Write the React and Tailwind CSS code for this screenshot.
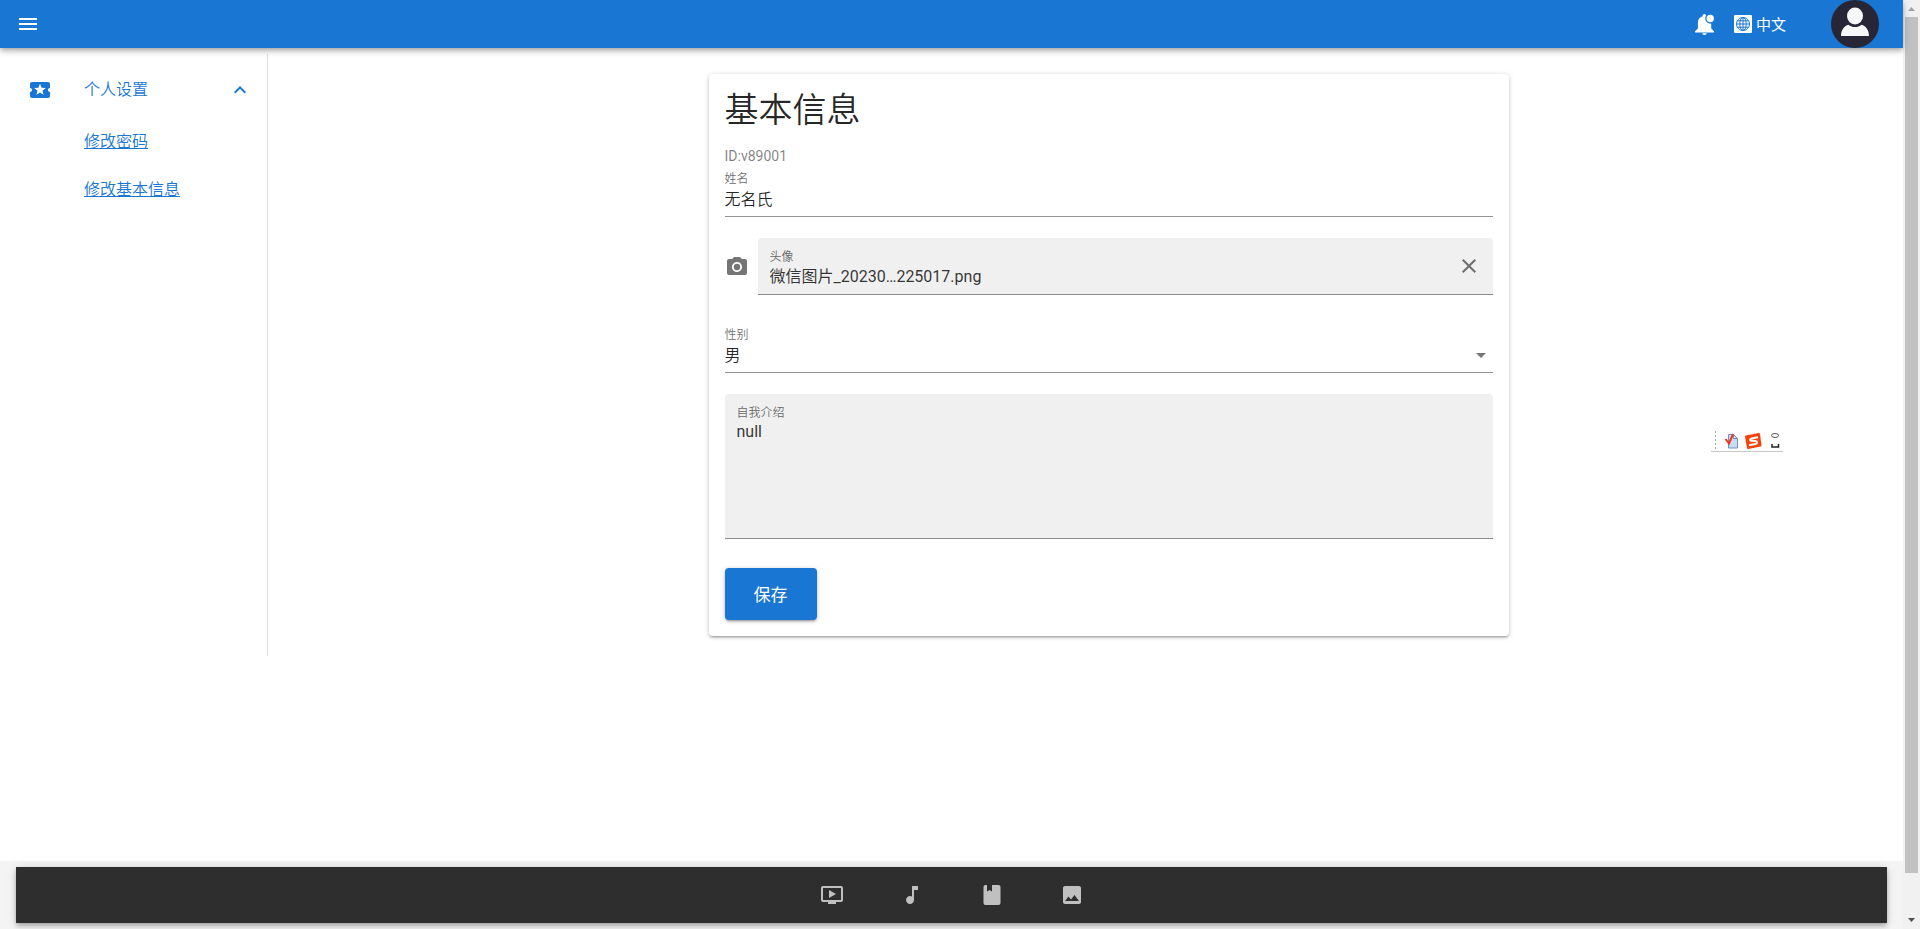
import React, { useState } from 'react';
import {
  MdMenu,
  MdLocalPlay,
  MdExpandLess,
  MdPhotoCamera,
  MdClose,
  MdArrowDropDown,
  MdOndemandVideo,
  MdMusicNote,
  MdImage,
} from 'react-icons/md';

const BellIcon = () => (
  <svg viewBox="0 0 19 21" className="h-[21px] w-[19px]" fill="currentColor" aria-hidden="true">
    <path d="M9.500 0c-1 0-1.900.8-1.900 1.800v.4C4.700 3 2.900 5.500 2.900 8.700v5.800L0 17.200V18.500h19v-1.300L16.200 14.500V9.600a5.300 5.300 0 0 1-5.700-6.900c.1-.4.300-.8.500-1.200C10.800.6 10.200 0 9.500 0z" />
    <circle cx="15.200" cy="4.500" r="3.700" />
    <path d="M7.300 19.300h4.400c0 1.100-1 1.700-2.200 1.700s-2.200-.6-2.200-1.700z" />
  </svg>
);

const GlobeIcon = () => (
  <svg viewBox="0 0 18 18" className="size-[18px]" aria-hidden="true">
    <rect width="18" height="18" rx="1" fill="#fff" />
    <g fill="none" stroke="#1976d2" strokeWidth="1">
      <circle cx="9" cy="9" r="6.500" />
      <ellipse cx="9" cy="9" rx="3.200" ry="6.500" />
      <path d="M9 2.500v13M2.500 9h13M3.500 5.800h11M3.500 12.200h11" />
    </g>
  </svg>
);

const Avatar = () => (
  <svg viewBox="0 0 48 48" className="size-12" aria-hidden="true">
    <circle cx="24" cy="24" r="24" fill="#272636" />
    <ellipse cx="24" cy="16" rx="8" ry="8.500" fill="#f7f7f7" />
    <path d="M10 36c0-5.500 3-10 7.500-11.200 1.800 1.500 4 2.300 6.500 2.300s4.700-.8 6.500-2.300C35 26 38 30.500 38 36z" fill="#f7f7f7" />
  </svg>
);

const BookIcon = () => (
  <svg viewBox="0 0 24 24" className="size-6" fill="currentColor" aria-hidden="true">
    <path d="M18.500 22a2 2 0 0 0 2-2V4a2 2 0 0 0-2-2H12v6.500L9.500 7 7 8.500V2H5.500a2 2 0 0 0-2 2v16a2 2 0 0 0 2 2z" />
  </svg>
);

const navItems = [
  { label: '视频', icon: <MdOndemandVideo size={24} /> },
  { label: '音乐', icon: <MdMusicNote size={24} /> },
  { label: '书籍', icon: <BookIcon /> },
  { label: '图片', icon: <MdImage size={24} /> },
];

const Header = () => (
  <header className="relative z-10 flex h-12 items-center bg-[#1976d2] pl-4 pr-6 text-white shadow-[0_2px_4px_-1px_rgba(0,0,0,0.2),0_4px_5px_rgba(0,0,0,0.14),0_1px_10px_rgba(0,0,0,0.12)]">
    <button type="button" aria-label="菜单">
      <MdMenu size={24} />
    </button>
    <div className="ml-auto flex items-center">
      <button type="button" aria-label="通知">
        <BellIcon />
      </button>
      <button type="button" className="ml-5 flex items-center gap-1 text-[15px] leading-6">
        <GlobeIcon />
        <span className="pt-0.5">中文</span>
      </button>
      <button type="button" className="ml-[45px]" aria-label="头像">
        <Avatar />
      </button>
    </div>
  </header>
);

const Sidebar = () => {
  const [open, setOpen] = useState(true);

  return (
    <nav className="mt-1.5 w-[268px] shrink-0 border-r border-black/12 pt-3 text-base font-[350] text-[#1976d2]">
      <button
        type="button"
        className="flex h-12 w-full items-center pl-7 pr-[15px]"
        aria-expanded={open}
        onClick={() => setOpen(!open)}
      >
        <MdLocalPlay size={24} />
        <span className="ml-8">个人设置</span>
        <MdExpandLess size={24} className={open ? 'ml-auto' : 'ml-auto rotate-180'} />
      </button>
      {open && (
        <ul className="pl-[84px] pt-1">
          <li className="flex h-12 items-center">
            <a href="#password" className="underline">修改密码</a>
          </li>
          <li className="flex h-12 items-center">
            <a href="#profile" className="underline">修改基本信息</a>
          </li>
        </ul>
      )}
    </nav>
  );
};

const ProfileCard = () => {
  const [name, setName] = useState('无名氏');
  const [file, setFile] = useState('微信图片_20230…225017.png');
  const [gender, setGender] = useState('男');
  const [intro, setIntro] = useState('null');

  return (
    <form
      className="w-full max-w-[800px] rounded bg-white p-4 font-[350] text-black/87 shadow-[0_1px_5px_rgba(0,0,0,0.2),0_2px_2px_rgba(0,0,0,0.14),0_3px_1px_-2px_rgba(0,0,0,0.12)]"
      onSubmit={(e) => e.preventDefault()}
    >
      <h1 className="text-[34px] leading-10 font-[350]">基本信息</h1>
      <p className="mt-4 text-sm leading-5 font-normal text-black/50">ID:v89001</p>

      <div className="flex flex-col border-b border-black/42 pt-[5px]">
        <label htmlFor="name" className="text-xs leading-4 text-black/60">姓名</label>
        <input
          id="name"
          className="h-[29px] pb-2 text-base outline-none"
          value={name}
          onChange={(e) => setName(e.target.value)}
        />
      </div>

      <div className="mt-[21px] flex items-center">
        <MdPhotoCamera size={24} className="shrink-0 text-black/54" />
        <div className="ml-[9px] flex h-[57px] flex-1 items-center rounded-t border-b border-black/42 bg-[#f0f0f0] px-3">
          <div className="flex flex-1 flex-col pt-1.5">
            <label htmlFor="file" className="text-xs leading-4 text-black/60">头像</label>
            <input id="file" className="h-6 text-base font-normal text-black/80 outline-none" value={file} readOnly />
          </div>
          <button type="button" aria-label="清除" className="text-black/54" onClick={() => setFile('')}>
            <MdClose size={24} />
          </button>
        </div>
      </div>

      <div className="mt-8 flex flex-col border-b border-black/42">
        <label htmlFor="gender" className="text-xs leading-4 text-black/60">性别</label>
        <div className="relative flex">
          <select
            id="gender"
            className="h-[29px] w-full appearance-none pb-1 text-base outline-none"
            value={gender}
            onChange={(e) => setGender(e.target.value)}
          >
            <option>男</option>
            <option>女</option>
          </select>
          <MdArrowDropDown size={24} className="pointer-events-none absolute right-0 top-0 text-black/54" />
        </div>
      </div>

      <div className="mt-[21px] flex flex-col rounded-t border-b border-black/42 bg-[#f0f0f0] px-3 pt-[11px]">
        <label htmlFor="intro" className="text-xs leading-4 text-black/60">自我介绍</label>
        <textarea
          id="intro"
          className="h-[117px] resize-none text-base leading-[22px] font-normal text-black/80 outline-none"
          value={intro}
          onChange={(e) => setIntro(e.target.value)}
        />
      </div>

      <button
        type="submit"
        className="mt-[29px] h-[52px] rounded bg-[#1976d2] px-[29px] pt-1 text-[17px] font-normal text-white shadow-[0_1px_5px_rgba(0,0,0,0.2),0_2px_2px_rgba(0,0,0,0.14),0_3px_1px_-2px_rgba(0,0,0,0.12)]"
      >
        保存
      </button>
    </form>
  );
};

// Small floating input method toolbar
const ImeBar = () => (
  <div className="absolute right-[120px] top-[430px] border-b border-[#c8c8c8]">
    <svg viewBox="0 0 72 21" className="h-[21px] w-[72px]" aria-hidden="true">
      <path d="M4.500 1v19" stroke="#aaa" strokeDasharray="2 2" />
      <path d="M17.500 4.500h5l4 4V18h-9z" fill="#c9def5" stroke="#6f8fbe" />
      <path d="M22.500 4.500v4h4" fill="none" stroke="#6f8fbe" />
      <path d="M14.500 9l3.500 4.500L22 4" fill="none" stroke="#f03a17" strokeWidth="2" />
      <path d="M35 6.500l13-2.500 1.500 11.500L37 18z" fill="#f4430d" stroke="#f4430d" strokeWidth="2" strokeLinejoin="round" />
      <path d="M47 7.200l-6.500 1.200c-2 .6-1.800 2.400.2 2.400l3.800.1c2 .2 1.900 2.700 0 3.100l-6.500 1.300" fill="none" stroke="#fff" strokeWidth="2" />
      <ellipse cx="64" cy="5.500" rx="3.500" ry="2" fill="none" stroke="#555" />
      <path d="M61 14v3h6.500v-3" fill="none" stroke="#222" strokeWidth="1.500" />
    </svg>
  </div>
);

const Footer = () => (
  <footer className="bg-[#f4f4f4] px-4 py-1.5">
    <nav className="flex h-14 items-center justify-center bg-[#2e2e2e] text-[#c0c0c0] shadow-[0_2px_4px_-1px_rgba(0,0,0,0.2),0_4px_5px_rgba(0,0,0,0.14),0_1px_10px_rgba(0,0,0,0.12)]">
      {navItems.map((item) => (
        <button key={item.label} type="button" aria-label={item.label} className="flex w-20 justify-center">
          {item.icon}
        </button>
      ))}
    </nav>
  </footer>
);

const Scrollbar = () => (
  <div className="flex w-[17px] shrink-0 flex-col items-center justify-between bg-[#f1f1f1]" aria-hidden="true">
    <svg viewBox="0 0 17 17" className="size-[17px]"><path d="M5 11h7L8.500 7z" fill="#a3a3a3" /></svg>
    <div className="mb-[39px] w-[13px] flex-1 bg-[#c1c1c1]" />
    <svg viewBox="0 0 17 17" className="size-[17px]"><path d="M5 6h7l-3.500 4z" fill="#505050" /></svg>
  </div>
);

const App = () => (
  <div className="flex h-screen overflow-hidden bg-white font-[Roboto,'Noto_Sans_CJK_SC',sans-serif]">
    <div className="relative flex min-w-0 flex-1 flex-col">
      <Header />
      <div className="flex flex-1 items-start">
        <div className="flex w-full">
          <Sidebar />
          <main className="flex flex-1 justify-center pb-5 pl-[46px] pt-[26px]">
            <ProfileCard />
          </main>
        </div>
      </div>
      <ImeBar />
      <Footer />
    </div>
    <Scrollbar />
  </div>
);

export default App;
